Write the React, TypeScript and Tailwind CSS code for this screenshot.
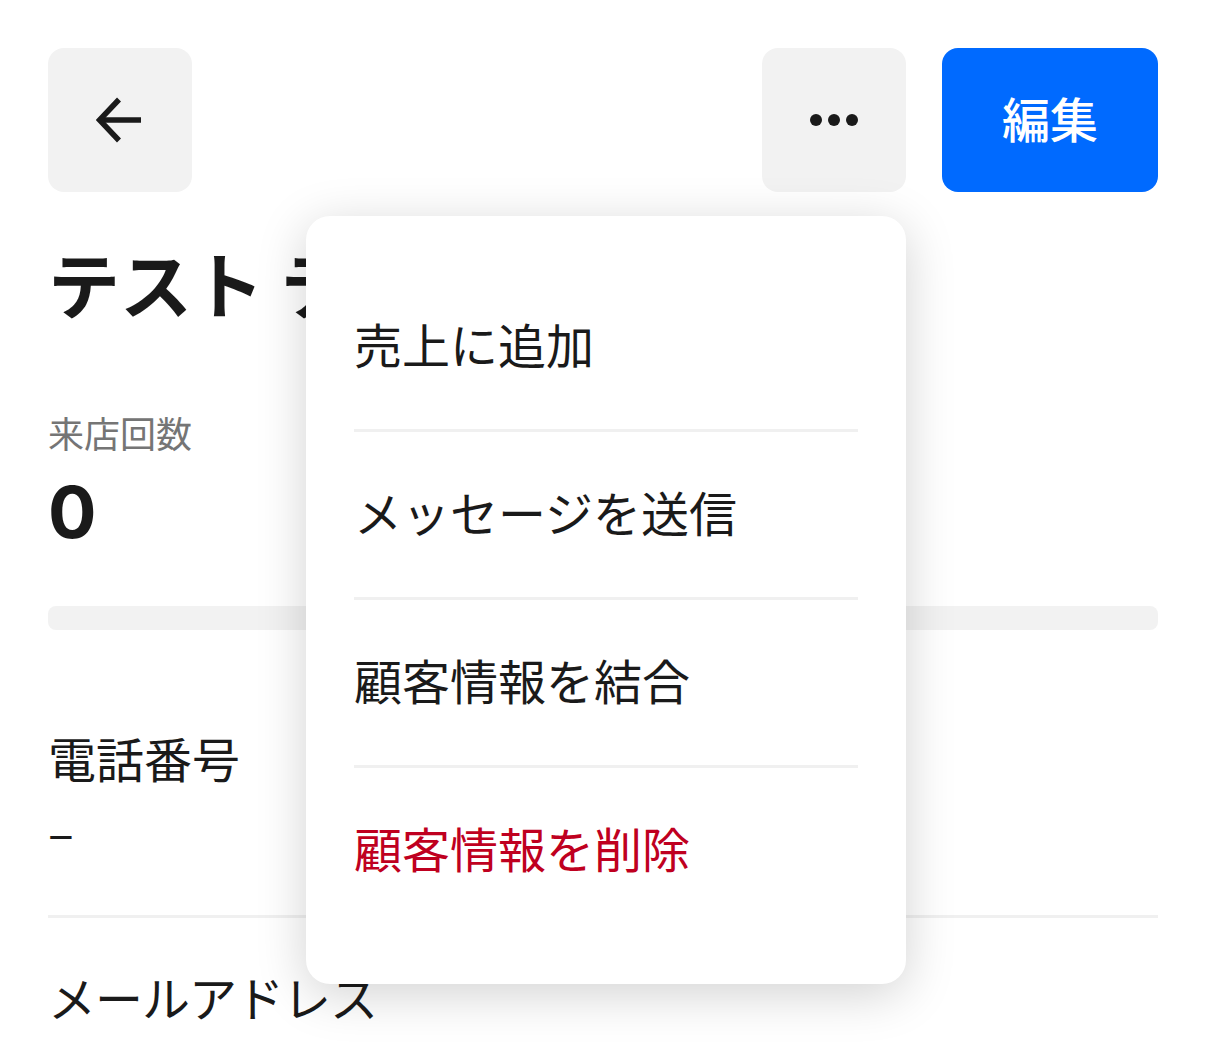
import React from "react";

const font = { fontFamily: '"Noto Sans CJK JP", "Noto Sans", sans-serif' };

function ArrowLeft() {
  return (
    <svg width="48" height="48" viewBox="0 0 48 48" fill="none">
      <path d="M45 24H4" stroke="#1a1a1a" strokeWidth="5.5" />
      <path d="M23 3.5L3.5 24L23 44.5" stroke="#1a1a1a" strokeWidth="5.5" strokeLinejoin="miter" />
    </svg>
  );
}

function Dots() {
  return (
    <svg width="48" height="14" viewBox="0 0 48 14" fill="#1a1a1a">
      <circle cx="6" cy="7" r="6" />
      <circle cx="24" cy="7" r="6" />
      <circle cx="42" cy="7" r="6" />
    </svg>
  );
}

const menuItems = [
  { label: "売上に追加" },
  { label: "メッセージを送信" },
  { label: "顧客情報を結合" },
  { label: "顧客情報を削除", danger: true },
];

export default function App() {
  return (
    <div className="relative min-h-[1053px] w-[1206px] overflow-hidden bg-white px-12 pt-12 text-[#1a1a1a]" style={font}>
      {/* header */}
      <div className="flex h-[144px] items-center">
        <button className="flex h-[144px] w-[144px] items-center justify-center rounded-[16px] bg-[#f2f2f2]">
          <ArrowLeft />
        </button>
        <div className="flex-1" />
        <button className="flex h-[144px] w-[144px] items-center justify-center rounded-[16px] bg-[#f2f2f2]">
          <Dots />
        </button>
        <button className="ml-9 flex h-[144px] w-[216px] items-center justify-center rounded-[16px] bg-[#006aff] pb-[6px] text-[48px] font-medium leading-[60px] text-white">
          編集
        </button>
      </div>

      <h1 className="mt-[42px] text-[72px] font-bold leading-[96px]">テスト テスト</h1>

      <div className="mt-[72px] text-[36px] leading-[60px] text-[#757575]">来店回数</div>
      <div className="mt-[8px] text-[72px] font-bold leading-[84px]" style={{ fontFamily: "Inter, sans-serif" }}>
        0
      </div>

      <div className="mt-[52px] h-6 rounded-[8px] bg-[#f2f2f2]" />

      <div className="mt-[97px] text-[48px] leading-[60px]">電話番号</div>
      <div className="mt-[13px] text-[48px] leading-[60px]">–</div>
      <div className="mt-[55px] h-[3px] bg-[#f0f0f0]" />
      <div className="mt-[48px] text-[48px] leading-[60px] tracking-[-1px]">メールアドレス</div>

      {/* overflow menu */}
      <div className="absolute left-[306px] top-[216px] w-[600px] rounded-[24px] bg-white px-12 pb-[51px] pt-12 shadow-[0_10px_50px_rgba(0,0,0,0.18)]">
        {menuItems.map((item, i) => (
          <div key={item.label}>
            {i > 0 && <div className="h-[3px] bg-[#f0f0f0]" />}
            <div
              className={`pb-[56px] pt-[49px] text-[48px] leading-[60px] ${item.danger ? "text-[#bf0020]" : "text-[#1a1a1a]"}`}
            >
              {item.label}
            </div>
          </div>
        ))}
      </div>
    </div>
  );
}
